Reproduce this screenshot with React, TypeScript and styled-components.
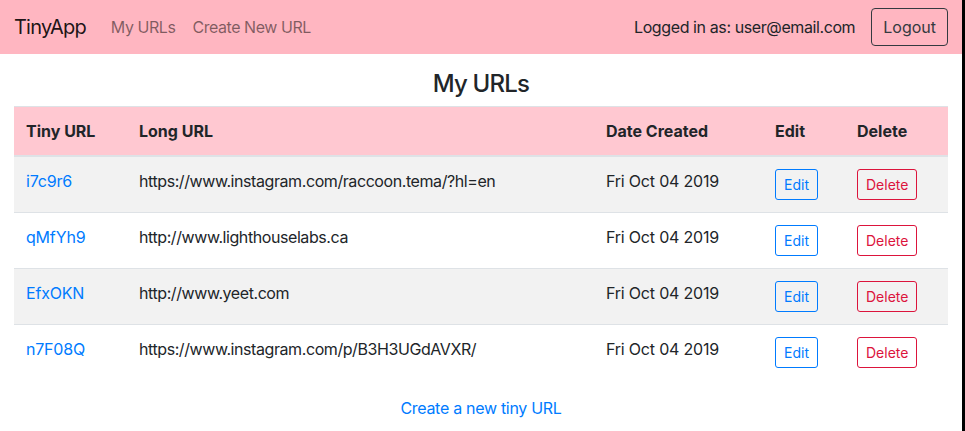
import React from "react";
import styled, { createGlobalStyle } from "styled-components";

const Global = createGlobalStyle`
  html, body { margin: 0; padding: 0; background: #000; }
  body {
    font-family: Inter, "Noto Sans", "Liberation Sans", sans-serif;
    font-size: 16px;
    line-height: 24px;
    letter-spacing: -0.3px;
    color: #212529;
  }
  * { box-sizing: border-box; }
`;

const Page = styled.div`
  width: 962px;
  height: 431px;
  background: #fff;
  display: flex;
  flex-direction: column;
`;

const Navbar = styled.nav`
  height: 54px;
  background: #ffb6c1;
  display: flex;
  align-items: center;
  padding: 0 14px;
`;

const Brand = styled.a`
  font-size: 20px;
  letter-spacing: -0.8px;
  color: rgba(0, 0, 0, 0.9);
  text-decoration: none;
  margin-right: 25px;
`;

const NavLinks = styled.div`
  display: flex;
  gap: 17px;
  flex: 1;
`;

const NavLink = styled.a`
  color: rgba(0, 0, 0, 0.5);
  text-decoration: none;
  letter-spacing: -0.45px;
`;

const UserArea = styled.div`
  display: flex;
  align-items: center;
  gap: 16px;
`;

const UserText = styled.span`
  color: #212529;
  letter-spacing: -0.4px;
`;

const LogoutButton = styled.button`
  height: 38px;
  padding: 0 11px;
  font: inherit;
  color: #343a40;
  background: transparent;
  border: 1px solid #343a40;
  border-radius: 4px;
`;

const Main = styled.main`
  padding: 15px 14px 0;
  display: flex;
  flex-direction: column;
  align-items: stretch;
`;

const Title = styled.h3`
  margin: 0 0 8px;
  text-align: center;
  font-size: 24px;
  line-height: 29px;
  font-weight: 500;
  letter-spacing: -0.8px;
`;

const Table = styled.table`
  width: 934px;
  border-collapse: collapse;
  table-layout: fixed;
  margin-bottom: 16px;
`;

const HeadCell = styled.th`
  text-align: left;
  font-weight: 700;
  letter-spacing: 0;
  padding: 12px;
  background: #ffc8d1;
  border-top: 1px solid #dee2e6;
  border-bottom: 2px solid #dee2e6;
  vertical-align: bottom;
`;

const Row = styled.tr<{ $striped: boolean }>`
  background: ${(p) => (p.$striped ? "#f2f2f2" : "#fff")};
`;

const Cell = styled.td<{ $last: boolean; $tight?: boolean }>`
  padding: 12px;
  vertical-align: top;
  border-bottom: ${(p) => (p.$last ? "none" : "1px solid #dee2e6")};
  white-space: nowrap;
  letter-spacing: ${(p) => (p.$tight ? "-0.42px" : "-0.2px")};
`;

const TinyLink = styled.a`
  color: #007bff;
  text-decoration: none;
`;

const SmallButton = styled.button<{ $tone: string }>`
  height: 31px;
  padding: 0 8px;
  font: inherit;
  font-size: 14px;
  line-height: 21px;
  letter-spacing: 0;
  color: ${(p) => p.$tone};
  background: transparent;
  border: 1px solid ${(p) => p.$tone};
  border-radius: 3px;
`;

const Footer = styled.div`
  text-align: center;
`;

const FooterLink = styled.a`
  color: #007bff;
  text-decoration: none;
`;

const urls = [
  { id: "i7c9r6", long: "https://www.instagram.com/raccoon.tema/?hl=en" },
  { id: "qMfYh9", long: "http://www.lighthouselabs.ca" },
  { id: "EfxOKN", long: "http://www.yeet.com" },
  { id: "n7F08Q", long: "https://www.instagram.com/p/B3H3UGdAVXR/" },
];

const widths = [113, 467, 169, 82, 103];

export default function App() {
  return (
    <>
      <Global />
      <Page>
        <Navbar>
          <Brand href="#">TinyApp</Brand>
          <NavLinks>
            <NavLink href="#">My URLs</NavLink>
            <NavLink href="#">Create New URL</NavLink>
          </NavLinks>
          <UserArea>
            <UserText>Logged in as: user@email.com</UserText>
            <LogoutButton>Logout</LogoutButton>
          </UserArea>
        </Navbar>
        <Main>
          <Title>My URLs</Title>
          <Table>
            <colgroup>
              {widths.map((w, i) => (
                <col key={i} style={{ width: w }} />
              ))}
            </colgroup>
            <thead>
              <tr>
                <HeadCell>Tiny URL</HeadCell>
                <HeadCell>Long URL</HeadCell>
                <HeadCell>Date Created</HeadCell>
                <HeadCell>Edit</HeadCell>
                <HeadCell>Delete</HeadCell>
              </tr>
            </thead>
            <tbody>
              {urls.map((u, i) => {
                const last = i === urls.length - 1;
                return (
                  <Row key={u.id} $striped={i % 2 === 0}>
                    <Cell $last={last}>
                      <TinyLink href="#">{u.id}</TinyLink>
                    </Cell>
                    <Cell $last={last} $tight>
                      {u.long}
                    </Cell>
                    <Cell $last={last}>Fri Oct 04 2019</Cell>
                    <Cell $last={last}>
                      <SmallButton $tone="#007bff">Edit</SmallButton>
                    </Cell>
                    <Cell $last={last}>
                      <SmallButton $tone="#dc143c">Delete</SmallButton>
                    </Cell>
                  </Row>
                );
              })}
            </tbody>
          </Table>
          <Footer>
            <FooterLink href="#">Create a new tiny URL</FooterLink>
          </Footer>
        </Main>
      </Page>
    </>
  );
}
